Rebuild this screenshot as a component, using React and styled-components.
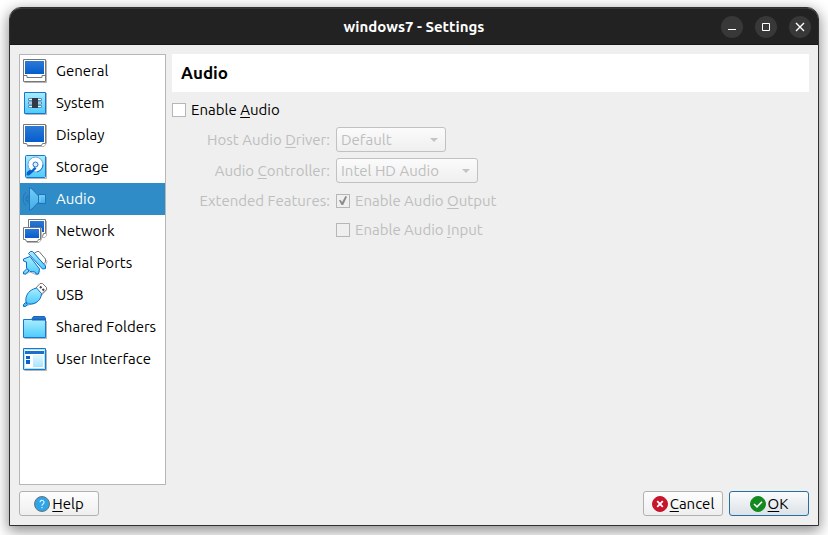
import React, { useState } from "react";
import styled, { createGlobalStyle, css } from "styled-components";

const GlobalStyle = createGlobalStyle`
  * { box-sizing: border-box; }
  body {
    margin: 0;
    background: #fff;
    color: #000;
    font-family: Ubuntu, "Noto Sans", "Open Sans", sans-serif;
    font-size: 15px;
    line-height: 20px;
  }
  button, select, input { font: inherit; color: inherit; margin: 0; }
`;

const Desktop = styled.div`
  display: flex;
  min-height: 100vh;
  padding: 7px 9px 9px;
  overflow: hidden;
`;

const Window = styled.main`
  flex: 1;
  min-width: 0;
  display: flex;
  flex-direction: column;
  background: #efefef;
  border: 1px solid #2e3032;
  border-radius: 12px 12px 0 0;
  box-shadow: 0 4px 14px 1px rgba(0, 0, 0, 0.45);
`;

const TitleBar = styled.header`
  display: grid;
  grid-template-columns: 1fr auto 1fr;
  align-items: center;
  height: 37px;
  padding: 0 7px;
  background: #222;
  border-top: 1px solid #363636;
  border-bottom: 1px solid #181818;
  border-radius: 11px 11px 0 0;
  color: #fff;
`;

const WindowTitle = styled.h1`
  grid-column: 2;
  margin: 0;
  font-size: 15px;
  line-height: 20px;
  font-weight: 700;
`;

const WindowControls = styled.div`
  display: flex;
  justify-content: flex-end;
  gap: 12px;
`;

const ControlButton = styled.button`
  display: flex;
  width: 22px;
  height: 22px;
  padding: 0;
  border: 0;
  border-radius: 50%;
  background: #383838;
  color: #fff;
`;

const Body = styled.div`
  flex: 1;
  display: flex;
  gap: 6px;
  padding: 9px 9px 6px;
`;

const Sidebar = styled.nav`
  flex: 0 0 147px;
  background: #fff;
  border: 1px solid #b6b6b6;
`;

const Category = styled.button`
  display: flex;
  align-items: center;
  gap: 8px;
  width: 100%;
  height: 32px;
  padding: 0 2px;
  border: 0;
  background: ${(p) => (p.$selected ? "#308cc6" : "transparent")};
  color: ${(p) => (p.$selected ? "#fff" : "#000")};
  line-height: 22px;
  text-align: left;
  white-space: nowrap;
`;

const CategoryIcon = styled.svg`
  flex: none;
  width: 26px;
  height: 26px;
`;

const Page = styled.section`
  flex: 1;
  min-width: 0;
`;

const PageTitle = styled.h2`
  margin: 0 0 8px;
  padding: 8px 9px;
  background: #fff;
  font-size: 17px;
  line-height: 22px;
  font-weight: 700;
`;

const Form = styled.div`
  display: grid;
  grid-template-columns: 158px 1fr;
  column-gap: 6px;
  row-gap: 6px;
  margin-top: 7px;
  align-items: center;
  color: #bebebe;
`;

const FieldLabel = styled.label`
  text-align: right;
  white-space: nowrap;
`;

const Mnemonic = styled.span`
  text-decoration: underline;
  text-decoration-thickness: 1px;
  text-decoration-skip-ink: none;
  text-underline-offset: 2px;
`;

const CheckLabel = styled.label`
  display: flex;
  align-items: center;
  gap: 5px;
  height: ${(p) => (p.$inner ? "23px" : "20px")};
`;

const CheckBox = styled.input`
  appearance: none;
  flex: none;
  display: grid;
  place-items: center;
  width: 14px;
  height: 14px;
  border: 1px solid #b6b6b6;
  background: #fff;

  &:disabled { background: #efefef; }

  &:checked::before {
    content: "";
    width: 8px;
    height: 9px;
    background: #8c8c8c;
    clip-path: polygon(0 50%, 16% 42%, 40% 68%, 80% 0, 100% 8%, 52% 100%, 32% 100%);
  }
`;

const SelectFrame = styled.div`
  display: grid;
  align-items: center;
  width: ${(p) => (p.$wide ? "142px" : "110px")};
  height: 25px;
  border: 1px solid #c1c1c1;
  border-radius: 3px;
  background: linear-gradient(#fbfbfb, #efefef);

  & > * { grid-area: 1 / 1; }
`;

const Select = styled.select`
  appearance: none;
  width: 100%;
  height: 23px;
  padding: 0 24px 0 4px;
  border: 0;
  background: transparent;
  color: #bebebe;
  opacity: 1;
`;

const Arrow = styled.span`
  justify-self: end;
  margin-right: 7px;
  border: 4px solid transparent;
  border-top-color: #c4c4c4;
  border-bottom: 0;
  pointer-events: none;
`;

const Footer = styled.footer`
  display: flex;
  gap: 6px;
  padding: 0 9px 9px;
`;

const Spacer = styled.div`
  flex: 1;
`;

const primary = css`
  border-color: #276fa0;
  background: linear-gradient(#fafbfc, #dce2e8);
`;

const DialogButton = styled.button`
  display: flex;
  align-items: center;
  justify-content: center;
  gap: 2px;
  width: 80px;
  height: 25px;
  padding: 0;
  border: 1px solid #b1b1b1;
  border-radius: 3px;
  background: linear-gradient(#fdfdfd, #efefef);
  ${(p) => p.$primary && primary}
`;

const shadow = "#b5b5b5";

const Drawings = {
  general: (
    <>
      <path d="M2.5 24.5h22V2.5" fill="none" stroke={shadow} />
      <path d="M1.5 1.5h22v22h-22z" fill="#fff" stroke="#777" />
      <path d="M3 3h19v13H3z" fill="url(#screen)" />
      <path d="M2 17.5h3v2h15v-2h3" fill="none" stroke="#777" />
    </>
  ),
  system: (
    <>
      <path d="M3.5 24.5h21V3" fill="none" stroke={shadow} />
      <path d="M2.5 2.5h21v21h-21z" fill="url(#sky)" stroke="#1976d2" />
      <g fill="#fff" stroke="#5a8fbb">
        <path d="M6.5 8.5h13v2h-13zM6.5 12h13v2h-13zM6.5 15.5h13v2h-13z" />
      </g>
      <path d="M10 8h6v10h-6z" fill="#333844" />
    </>
  ),
  display: (
    <>
      <path d="M5 24.5h17l2.5-3V3" fill="none" stroke={shadow} />
      <path d="M1.5 2.5h22v19h-3l-1 2h-14l-1-2h-3z" fill="#fff" stroke="#777" />
      <path d="M3 4h19v16H3z" fill="url(#screen)" />
    </>
  ),
  storage: (
    <>
      <path d="M4.5 24.5h20V3" fill="none" stroke={shadow} />
      <rect x="3.5" y="1.5" width="20" height="22" rx="1" fill="url(#sky)" stroke="#1976d2" />
      <circle cx="13.5" cy="10.5" r="7.5" fill="#fff" stroke="#6aa5d6" />
      <circle cx="13.5" cy="10.5" r="2.5" fill="#d6f0ff" stroke="#1b73d0" />
      <path d="M21 10.5a7.5 7.5 0 0 1-6 7.4" fill="none" stroke="#1976d2" />
      <path d="M12.5 13l2 1.5-4.5 4.5-3 2.500-2.500-.2.400-3 2.600-2.300 2 .2z" fill="#0b61cb" />
    </>
  ),
  audio: (
    <>
      <path d="M6.5 8.5Q1 13 6.5 17.5M4 6Q-2 13 4 20" fill="none" stroke="#2376bb" />
      <path d="M6 10.5Q3.5 13 6 15.5z" fill="#55b7ec" stroke="#2376bb" />
      <path d="M7.5 1.5L10 3l7 7.500v5L10 23l-2.500 1.500z" fill="url(#speaker)" stroke="#2271bd" />
      <path d="M16.5 8.5h7v9h-7z" fill="url(#speaker)" stroke="#1f70bd" />
      <path d="M18 10v6" stroke="#7dccf3" />
    </>
  ),
  network: (
    <>
      <path d="M20 19.5h3l1.5-2V3" fill="none" stroke={shadow} />
      <path d="M6.5 1.5h17v14h-2l-1 3h-11l-1-3h-2z" fill="#fff" stroke="#777" />
      <path d="M8 3h14v11H8z" fill="url(#screen)" />
      <path d="M5 24.5h12l2.5-3V10" fill="none" stroke={shadow} />
      <path d="M1.5 9.5h17v12h-2l-1 2h-11l-1-2h-2z" fill="#fff" stroke="#777" />
      <path d="M3 11h14v9H3z" fill="url(#screen)" />
    </>
  ),
  serial: (
    <>
      <path d="M16 2.5h2l7 9-1.5 4" fill="none" stroke={shadow} />
      <path d="M12 3.5l3-2h2l6.5 7.5v3l-2 2z" fill="#fff" stroke="#777" />
      <path d="M3 24.500l5-2.500 7 3 3-4" fill="none" stroke={shadow} />
      <g fill="url(#sky)" stroke="#0f6bcc" strokeLinejoin="round">
        <path d="M5 18.5L1.500 22v2h2L7 21z" />
        <path d="M8 6.500L1.500 9v2l3 1v6l3.500 3.500 5 .5 1 2h2.500l1-5z" />
        <path d="M6.500 3.500l2-2h2L23.500 16v2.500l-3 .5z" />
      </g>
    </>
  ),
  usb: (
    <>
      <path d="M4 24l4-1.500c5-.5 9-3 10.500-8L25 7.500" fill="none" stroke={shadow} />
      <path d="M13.5 6.5l4.500-5h2.500l4 4v2l-5.500 5z" fill="#fff" stroke="#777" />
      <path d="M18 4.500l1.500 1.500M20.500 7l1.500 1.500" stroke="#444" strokeWidth="2" />
      <path d="M1.500 22.500l2-2 2 2-2 2h-2z" fill="#43bdf2" stroke="#0f6bcc" />
      <path d="M4 20c-1-6 2.500-11 7.500-13l3-1 5 5.500c-.5 6.500-5 11-13 10.500z" fill="url(#sky)" stroke="#0f6bcc" strokeLinejoin="round" />
    </>
  ),
  folders: (
    <>
      <path d="M2.5 24.5h22V7" fill="none" stroke={shadow} />
      <path d="M9.5 5.5l2-3h11l1 2v3h-14z" fill="#2a78cf" stroke="#1767bd" />
      <path d="M1.5 5.5h22v18h-22z" fill="url(#sky)" stroke="#1976d2" />
      <path d="M10 5.5h14" stroke="#1767bd" strokeWidth="2" />
    </>
  ),
  interface: (
    <>
      <path d="M2.5 24.5h22V4" fill="none" stroke={shadow} />
      <path d="M1.5 2.5h22v21h-22z" fill="#fff" stroke="#1976d2" />
      <path d="M2.5 3.5h20v19h-20z" fill="none" stroke="#a6e6ff" />
      <path d="M3 5h19v3H3z" fill="#1d6fce" />
      <path d="M4 10h4v3H4zM4 14h4v4H4z" fill="#0b61cb" />
      <path d="M11 9h10v12H11z" fill="url(#pane)" />
    </>
  ),
};

const categories = [
  ["general", "General"],
  ["system", "System"],
  ["display", "Display"],
  ["storage", "Storage"],
  ["audio", "Audio"],
  ["network", "Network"],
  ["serial", "Serial Ports"],
  ["usb", "USB"],
  ["folders", "Shared Folders"],
  ["interface", "User Interface"],
];

const gradients = [
  ["screen", "#2b7bd5", "#055ccc"],
  ["sky", "#a9edff", "#4ecbfa"],
  ["speaker", "#72cdf7", "#42ade6"],
  ["pane", "#e2f7ff", "#a8e5ff"],
];

function Gradients() {
  return (
    <defs>
      {gradients.map(([id, from, to]) => (
        <linearGradient key={id} id={id} x1="0" y1="0" x2="0" y2="1">
          <stop stopColor={from} />
          <stop offset="1" stopColor={to} />
        </linearGradient>
      ))}
    </defs>
  );
}

function StatusIcon({ color, ring, children }) {
  return (
    <svg width="16" height="16" viewBox="0 0 16 16" fill="none" aria-hidden="true">
      <circle cx="8" cy="8" r="7.5" fill={color} stroke={ring || color} />
      {children}
    </svg>
  );
}

export default function App() {
  const [selected, setSelected] = useState("audio");
  const [enabled, setEnabled] = useState(false);

  return (
    <>
      <GlobalStyle />
      <Desktop>
        <Window>
          <TitleBar>
            <WindowTitle>windows7 - Settings</WindowTitle>
            <WindowControls>
              <ControlButton aria-label="Minimize">
                <svg width="22" height="22" stroke="#fff"><path d="M7 13.5h8" /></svg>
              </ControlButton>
              <ControlButton aria-label="Maximize">
                <svg width="22" height="22" stroke="#fff" fill="none"><path d="M7.5 7.5h7v7h-7z" /></svg>
              </ControlButton>
              <ControlButton aria-label="Close">
                <svg width="22" height="22" stroke="#fff" strokeWidth="1.4"><path d="M7 7l8 8M15 7l-8 8" /></svg>
              </ControlButton>
            </WindowControls>
          </TitleBar>

          <Body>
            <Sidebar aria-label="Settings categories">
              {categories.map(([id, name], i) => (
                <Category key={id} $selected={id === selected} onClick={() => setSelected(id)}>
                  <CategoryIcon viewBox="0 0 26 26" aria-hidden="true">
                    {i === 0 && <Gradients />}
                    {Drawings[id]}
                  </CategoryIcon>
                  {name}
                </Category>
              ))}
            </Sidebar>

            <Page>
              <PageTitle>Audio</PageTitle>
              <CheckLabel>
                <CheckBox type="checkbox" checked={enabled} onChange={(e) => setEnabled(e.target.checked)} />
                <span>Enable <Mnemonic>A</Mnemonic>udio</span>
              </CheckLabel>
              <Form>
                <FieldLabel htmlFor="driver">Host Audio <Mnemonic>D</Mnemonic>river:</FieldLabel>
                <SelectFrame>
                  <Select id="driver" disabled={!enabled}><option>Default</option></Select>
                  <Arrow />
                </SelectFrame>
                <FieldLabel htmlFor="controller">Audio <Mnemonic>C</Mnemonic>ontroller:</FieldLabel>
                <SelectFrame $wide>
                  <Select id="controller" disabled={!enabled}><option>Intel HD Audio</option></Select>
                  <Arrow />
                </SelectFrame>
                <FieldLabel htmlFor="output">Extended Features:</FieldLabel>
                <CheckLabel $inner>
                  <CheckBox id="output" type="checkbox" defaultChecked disabled={!enabled} />
                  <span>Enable Audio <Mnemonic>O</Mnemonic>utput</span>
                </CheckLabel>
                <span />
                <CheckLabel $inner>
                  <CheckBox type="checkbox" disabled={!enabled} />
                  <span>Enable Audio <Mnemonic>I</Mnemonic>nput</span>
                </CheckLabel>
              </Form>
            </Page>
          </Body>

          <Footer>
            <DialogButton>
              <StatusIcon color="#2fa4e7" ring="#68737b">
                <path d="M6 6.3a2 2 0 1 1 3 1.700q-1 .6-1 1.700M8 11v1.300" stroke="#d9f1ff" strokeWidth="1.2" />
              </StatusIcon>
              <span><Mnemonic>H</Mnemonic>elp</span>
            </DialogButton>
            <Spacer />
            <DialogButton>
              <StatusIcon color="#c8142d">
                <path d="M5.2 5.2l5.600 5.600M10.800 5.200l-5.600 5.600" stroke="#fff" strokeWidth="1.8" />
              </StatusIcon>
              <span><Mnemonic>C</Mnemonic>ancel</span>
            </DialogButton>
            <DialogButton $primary>
              <StatusIcon color="#14891f">
                <path d="M4 8l3 2.800 5-5" stroke="#fff" strokeWidth="1.6" />
              </StatusIcon>
              <span><Mnemonic>O</Mnemonic>K</span>
            </DialogButton>
          </Footer>
        </Window>
      </Desktop>
    </>
  );
}
